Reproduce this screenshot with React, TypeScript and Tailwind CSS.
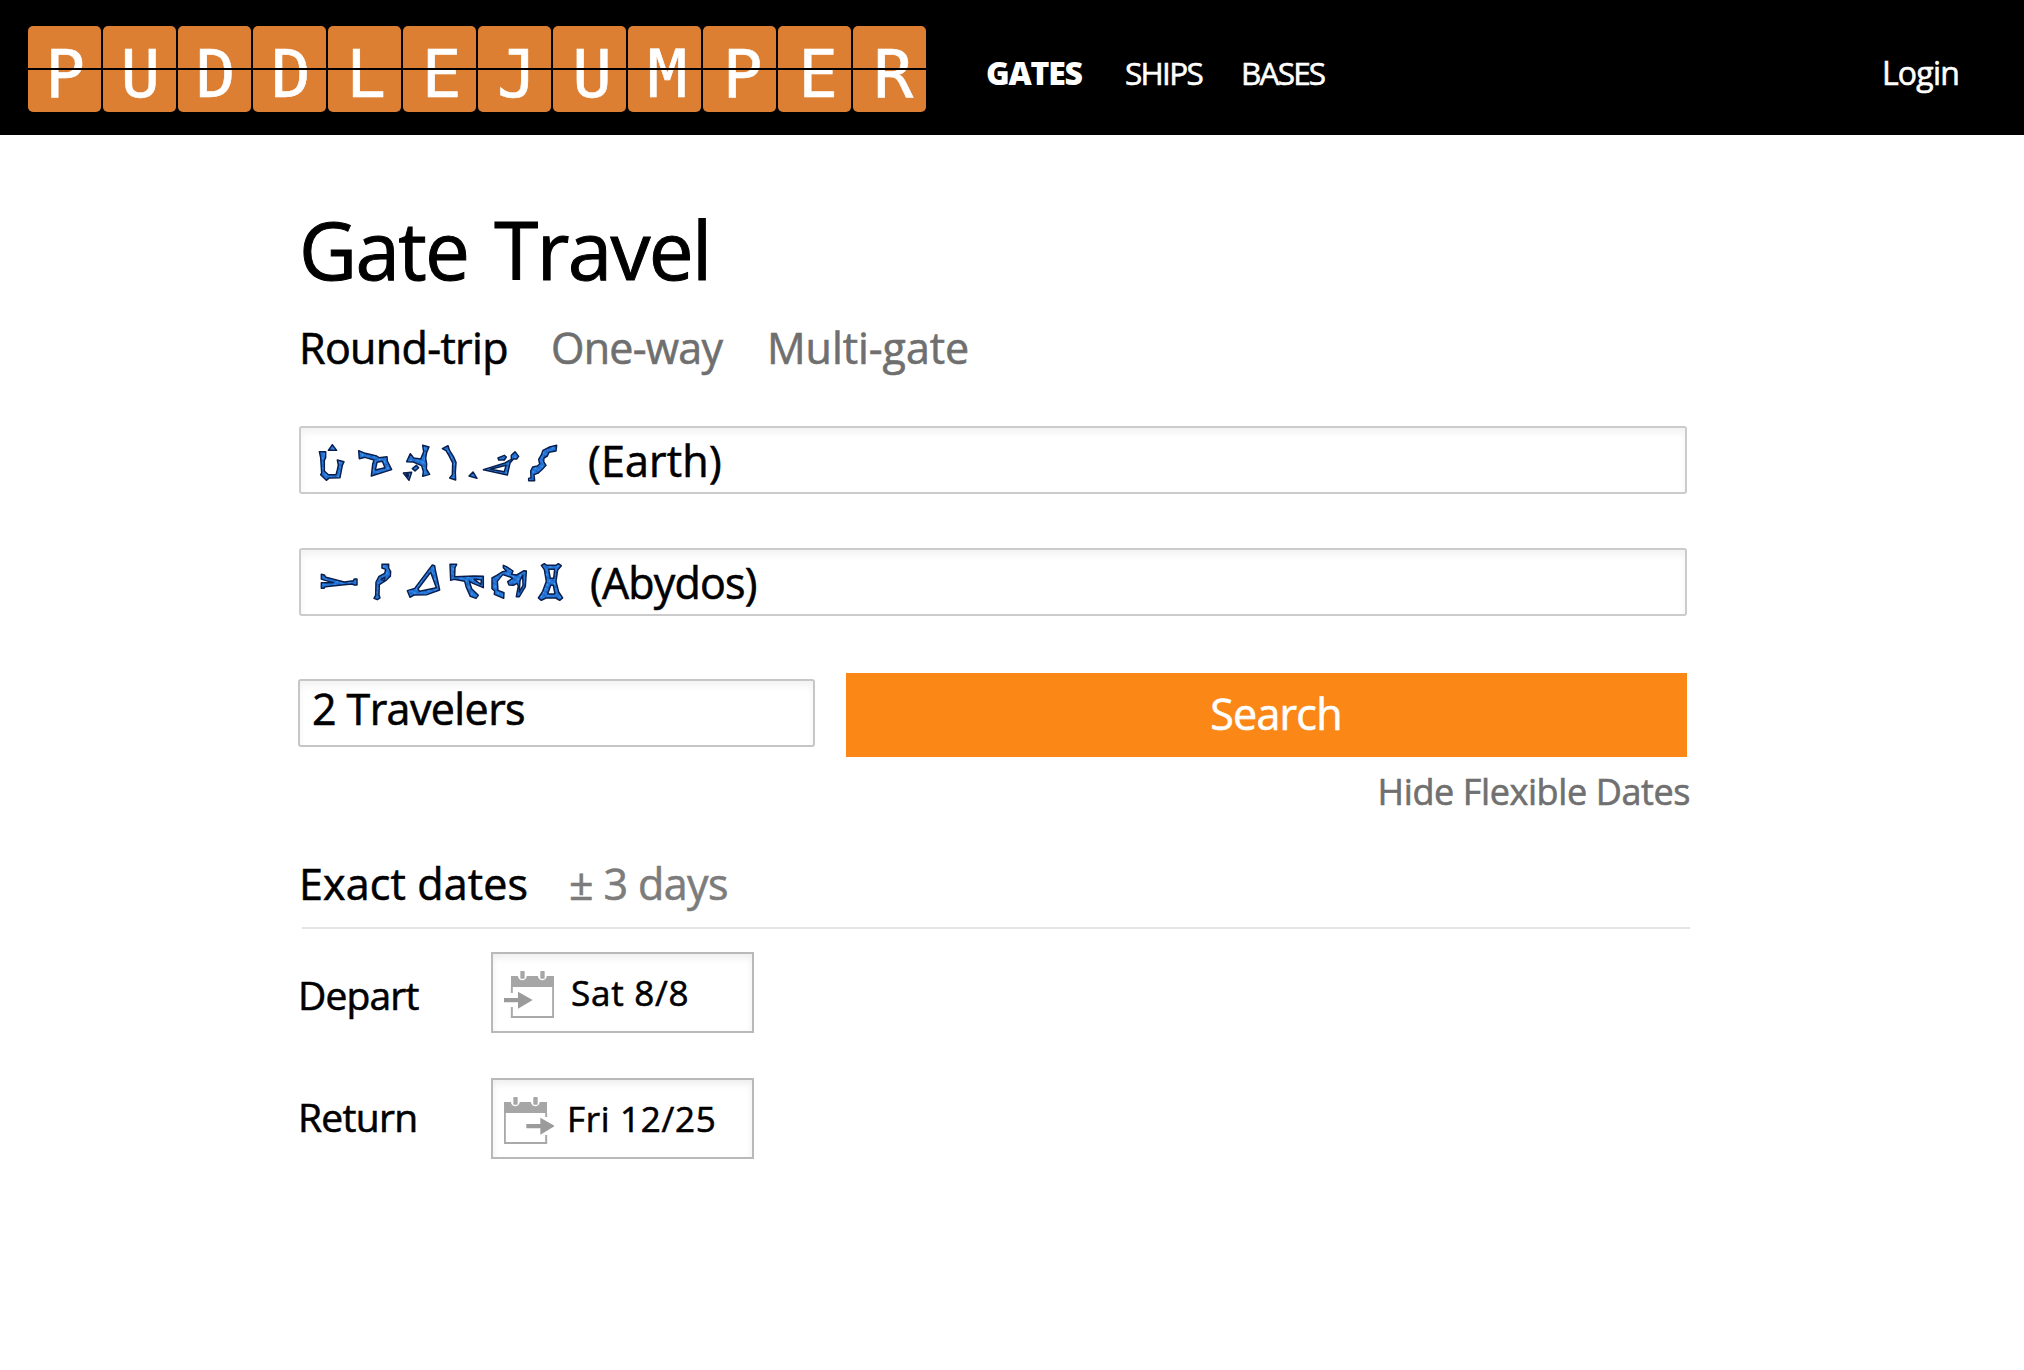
import type { ReactNode } from "react";

const LOGO = "PUDDLEJUMPER".split("");

/* Address glyphs, six per gate, drawn as outlined polygons with cut-outs. */
const EARTH_GLYPHS = [
  "M97 59L110 76L85 76Z M58 80L77 80L77 98L73 106L73 138L85 149L108 149L111 139L115 120L112 105L132 110L127 121L120 158L88 159L79 166L62 149L65 144L62 98Z",
  "M176 77L196 85L230 93L237 98L261 95L262 108L275 134L214 153L218 118L222 105L195 97L178 101Z M231 112L226 135L255 128L247 109Z",
  "M368 61L387 66L380 82L377 99L380 117L379 132L389 148L368 154L370 140L365 122L340 111L320 110L331 86L341 99L362 102L371 80Z M349 121L356 128L345 138L337 131Z M310 144L335 142L327 166Z M319 148L325 148L324 155Z",
  "M427 71L444 62L449 77L460 94L468 112L466 142L467 165L449 159L457 149L458 114L447 92L438 77Z M519 141L531 160L507 153Z",
  "M594 99L613 91L619 96L613 105L596 105Z M634 91L645 80L656 94L650 102L641 101L630 114L622 150L550 134L615 114L634 103Z M571 133L613 140L618 121Z",
  "M770 61L768 78L747 82L742 93L732 99L731 110L738 121L727 133L715 144L702 149L704 167L686 167L686 160L693 158L692 138L698 126L712 123L719 117L716 103L724 90L729 76L749 66Z",
];

const ABYDOS_GLYPHS = [
  "M94 118L103 120L108 127L148 137L163 141L190 137L193 132L201 132L201 150L193 150L186 147L155 150L106 155L102 160L94 160L94 143L106 143L130 143L108 137L94 132Z",
  "M276 88L296 88L296 99L302 110L301 124L287 137L268 149L267 180L270 189L262 194L252 190L257 181L258 141L267 124L284 115L287 103L276 99Z M273 134L285 126L281 137Z",
  "M419 100L427 90L434 92L436 105L449 165L411 179L372 180L360 187L352 167L374 160Z M422 112L384 162L389 169L439 158Z",
  "M480 88L500 88L495 98L494 125L552 123L580 124L580 158L549 145L538 139L545 161L565 181L558 190L541 184L529 157L524 139L492 133L482 136Z M552 133L573 148L574 134Z",
  "M640 91L651 96L669 108L665 118L680 120L702 107L709 108L706 155L688 185L679 185L685 153L681 145L670 151L657 150L653 140L668 130L661 126L638 119L622 139L624 166L642 173L641 190L613 178L614 168L606 161L606 129L620 121L638 110L649 108L640 98Z M698 121L690 137L688 171L699 151Z",
  "M754 91L763 86L770 91L798 91L805 86L814 92L803 105L798 139L806 171L818 189L809 196L797 189L768 189L754 196L745 189L758 169L769 139L763 104Z M776 103L781 130L791 130L794 103Z M782 151L773 177L795 177L790 151Z",
];

function Glyphs({ id, paths, viewBox, className }: { id: string; paths: string[]; viewBox: string; className: string }) {
  return (
    <svg viewBox={viewBox} className={className} aria-hidden="true">
      <defs>
        <pattern id={id} width="17" height="13" patternUnits="userSpaceOnUse" patternTransform="rotate(28)">
          <rect width="17" height="13" fill="#2374d8" />
          <circle cx="4" cy="4" r="2.4" fill="#55aaf8" />
          <circle cx="12" cy="10" r="2.2" fill="#1452ad" />
          <circle cx="13" cy="3" r="1.6" fill="#3c93ee" />
        </pattern>
      </defs>
      {paths.map((d) => (
        <path key={d} d={d} fill={`url(#${id})`} fillRule="evenodd" stroke="#0a1f4d" strokeWidth="4.4" strokeLinejoin="round" />
      ))}
    </svg>
  );
}

/* Calendar with an arrow entering (depart) or leaving (return) the page. */
function CalendarIcon({ direction }: { direction: "in" | "out" }) {
  const shift = direction === "in" ? 21 : 0;
  return (
    <svg viewBox="0 0 150 141" className="mt-[3px] h-[47px] w-[50px] shrink-0" aria-hidden="true">
      <g transform={`translate(${shift} 0)`}>
        <path d="M0 15H21A13 13 0 0 0 47 15H81A13 13 0 0 0 107 15H129V48H0Z" fill="#a6a6a6" />
        <rect x="28" y="0" width="13" height="23" rx="2" fill="#a6a6a6" />
        <rect x="88" y="0" width="13" height="23" rx="2" fill="#a6a6a6" />
        {direction === "in" ? (
          <path d="M2.5 48V66M2.5 108V138H126.500V48" fill="none" stroke="#a9a9a9" strokeWidth="6" />
        ) : (
          <path d="M126.500 48V60M126.500 114V138H2.500V48" fill="none" stroke="#a9a9a9" strokeWidth="6" />
        )}
      </g>
      <path
        transform={direction === "in" ? "translate(0 0)" : "translate(67 0)"}
        d="M0 81H42V62L86 87L42 113V94H0Z"
        fill="#9b9b9b"
      />
    </svg>
  );
}

function AddressField({ children }: { children: ReactNode }) {
  return (
    <div className="flex h-[68px] w-[1388px] items-start rounded-[3px] border-2 border-[#cbcbcb] bg-white text-[43px] leading-[66px] shadow-[inset_0_5px_7px_rgba(0,0,0,0.05)]">
      {children}
    </div>
  );
}

function DateField({ direction, children }: { direction: "in" | "out"; children: ReactNode }) {
  return (
    <div className="flex h-[81px] w-[263px] items-start border-2 border-[#b9b9b9] bg-white pl-[11px] text-[35px] leading-[78px] shadow-[inset_0_4px_7px_rgba(0,0,0,0.07)]">
      <div className="flex h-[77px] items-center">
        <CalendarIcon direction={direction} />
      </div>
      {children}
    </div>
  );
}

export default function App() {
  return (
    <div className="min-h-[1370px] bg-white font-['Open_Sans',sans-serif] whitespace-nowrap text-black [-webkit-text-stroke:0.6px]">
      <header className="flex h-[135px] items-start bg-black text-white">
        <div className="relative mt-[26px] ml-[28px] grid h-[86px] w-[898px] grid-cols-12 gap-[2px]">
          {LOGO.map((letter, i) => (
            <div
              key={i}
              className="h-[86px] rounded-[5px] bg-[#dc7f33] text-center font-['DejaVu_Sans_Mono',monospace] text-[66px] leading-[98px]"
              style={{ paddingLeft: 1 + i * 0.6 }}
            >
              {letter}
            </div>
          ))}
          <div className="absolute inset-x-0 top-[42px] h-[2px] bg-black" />
        </div>
        <nav className="ml-[60px] flex text-[32px] leading-[145px]">
          <a className="w-[139px] font-extrabold tracking-[-1.2px] [-webkit-text-stroke:0px]">GATES</a>
          <a className="w-[116px] text-[31.5px] tracking-[-1.7px]">SHIPS</a>
          <a className="text-[31.5px] tracking-[-1.8px]">BASES</a>
        </nav>
        <a className="mr-[65px] ml-auto text-[32px] leading-[145px] tracking-[-0.8px]">Login</a>
      </header>

      <main className="ml-[299px] w-[1391px] pt-[74px]">
        <h1 className="text-[80px] leading-[80px] tracking-[-1.7px] [-webkit-text-stroke:1px] [word-spacing:7px]">Gate Travel</h1>

        <div className="mt-[35px] flex text-[43px] leading-[48px] text-[#6f6f6f]">
          <span className="w-[252px] tracking-[-0.65px] text-black">Round-trip</span>
          <span className="w-[216px] tracking-[-0.75px]">One-way</span>
          <span className="tracking-[-0.05px]">Multi-gate</span>
        </div>

        <div className="mt-[54px]">
          <AddressField>
            <Glyphs id="earth" paths={EARTH_GLYPHS} viewBox="48 51 732 129" className="mt-[14px] ml-[15px] h-[43px] w-[244px]" />
            <span className="ml-[28px] tracking-[0.2px]">(Earth)</span>
          </AddressField>
        </div>

        <div className="mt-[54px]">
          <AddressField>
            <Glyphs id="abydos" paths={ABYDOS_GLYPHS} viewBox="84 78 741 126" className="mt-[11px] ml-[17px] h-[42px] w-[247px]" />
            <span className="ml-[25px] tracking-[-0.8px]">(Abydos)</span>
          </AddressField>
        </div>

        <div className="mt-[57px] flex items-start">
          <div className="-ml-px mt-[6px] h-[68px] w-[517px] rounded-[3px] border-2 border-[#c6c6c6] pl-[12px] text-[43px] leading-[56px] tracking-[-0.6px] shadow-[inset_0_5px_7px_rgba(0,0,0,0.05)]">
            2 Travelers
          </div>
          <button className="ml-[31px] h-[84px] w-[841px] bg-[#fb8816] pb-[2px] pl-[19px] text-[43px] leading-[82px] tracking-[-0.75px] text-white">
            Search
          </button>
        </div>

        <div className="mt-[15px] text-right text-[36px] leading-[40px] tracking-[-0.4px] text-[#707070]">
          Hide Flexible Dates
        </div>

        <div className="mt-[48px] ml-[3px] flex border-b-2 border-[#e4e4e4] pb-[19px] text-[43px] leading-[48px]">
          <span className="-ml-[4px] w-[271px] pl-px tracking-[0.15px]">Exact dates</span>
          <span className="tracking-[-0.6px] text-[#7c7c7c]">± 3 days</span>
        </div>

        <div className="mt-[23px] flex h-[81px]">
          <span className="-ml-[2px] w-[194px] pl-px text-[39px] leading-[86px] tracking-[-0.85px]">Depart</span>
          <DateField direction="in">
            <span className="ml-[17px] tracking-[0.75px]">Sat 8/8</span>
          </DateField>
        </div>

        <div className="mt-[45px] flex h-[81px]">
          <span className="-ml-[2px] w-[194px] pl-px text-[39px] leading-[78px] tracking-[-0.7px]">Return</span>
          <DateField direction="out">
            <span className="ml-[13px] tracking-[0.7px]">Fri 12/25</span>
          </DateField>
        </div>
      </main>
    </div>
  );
}
